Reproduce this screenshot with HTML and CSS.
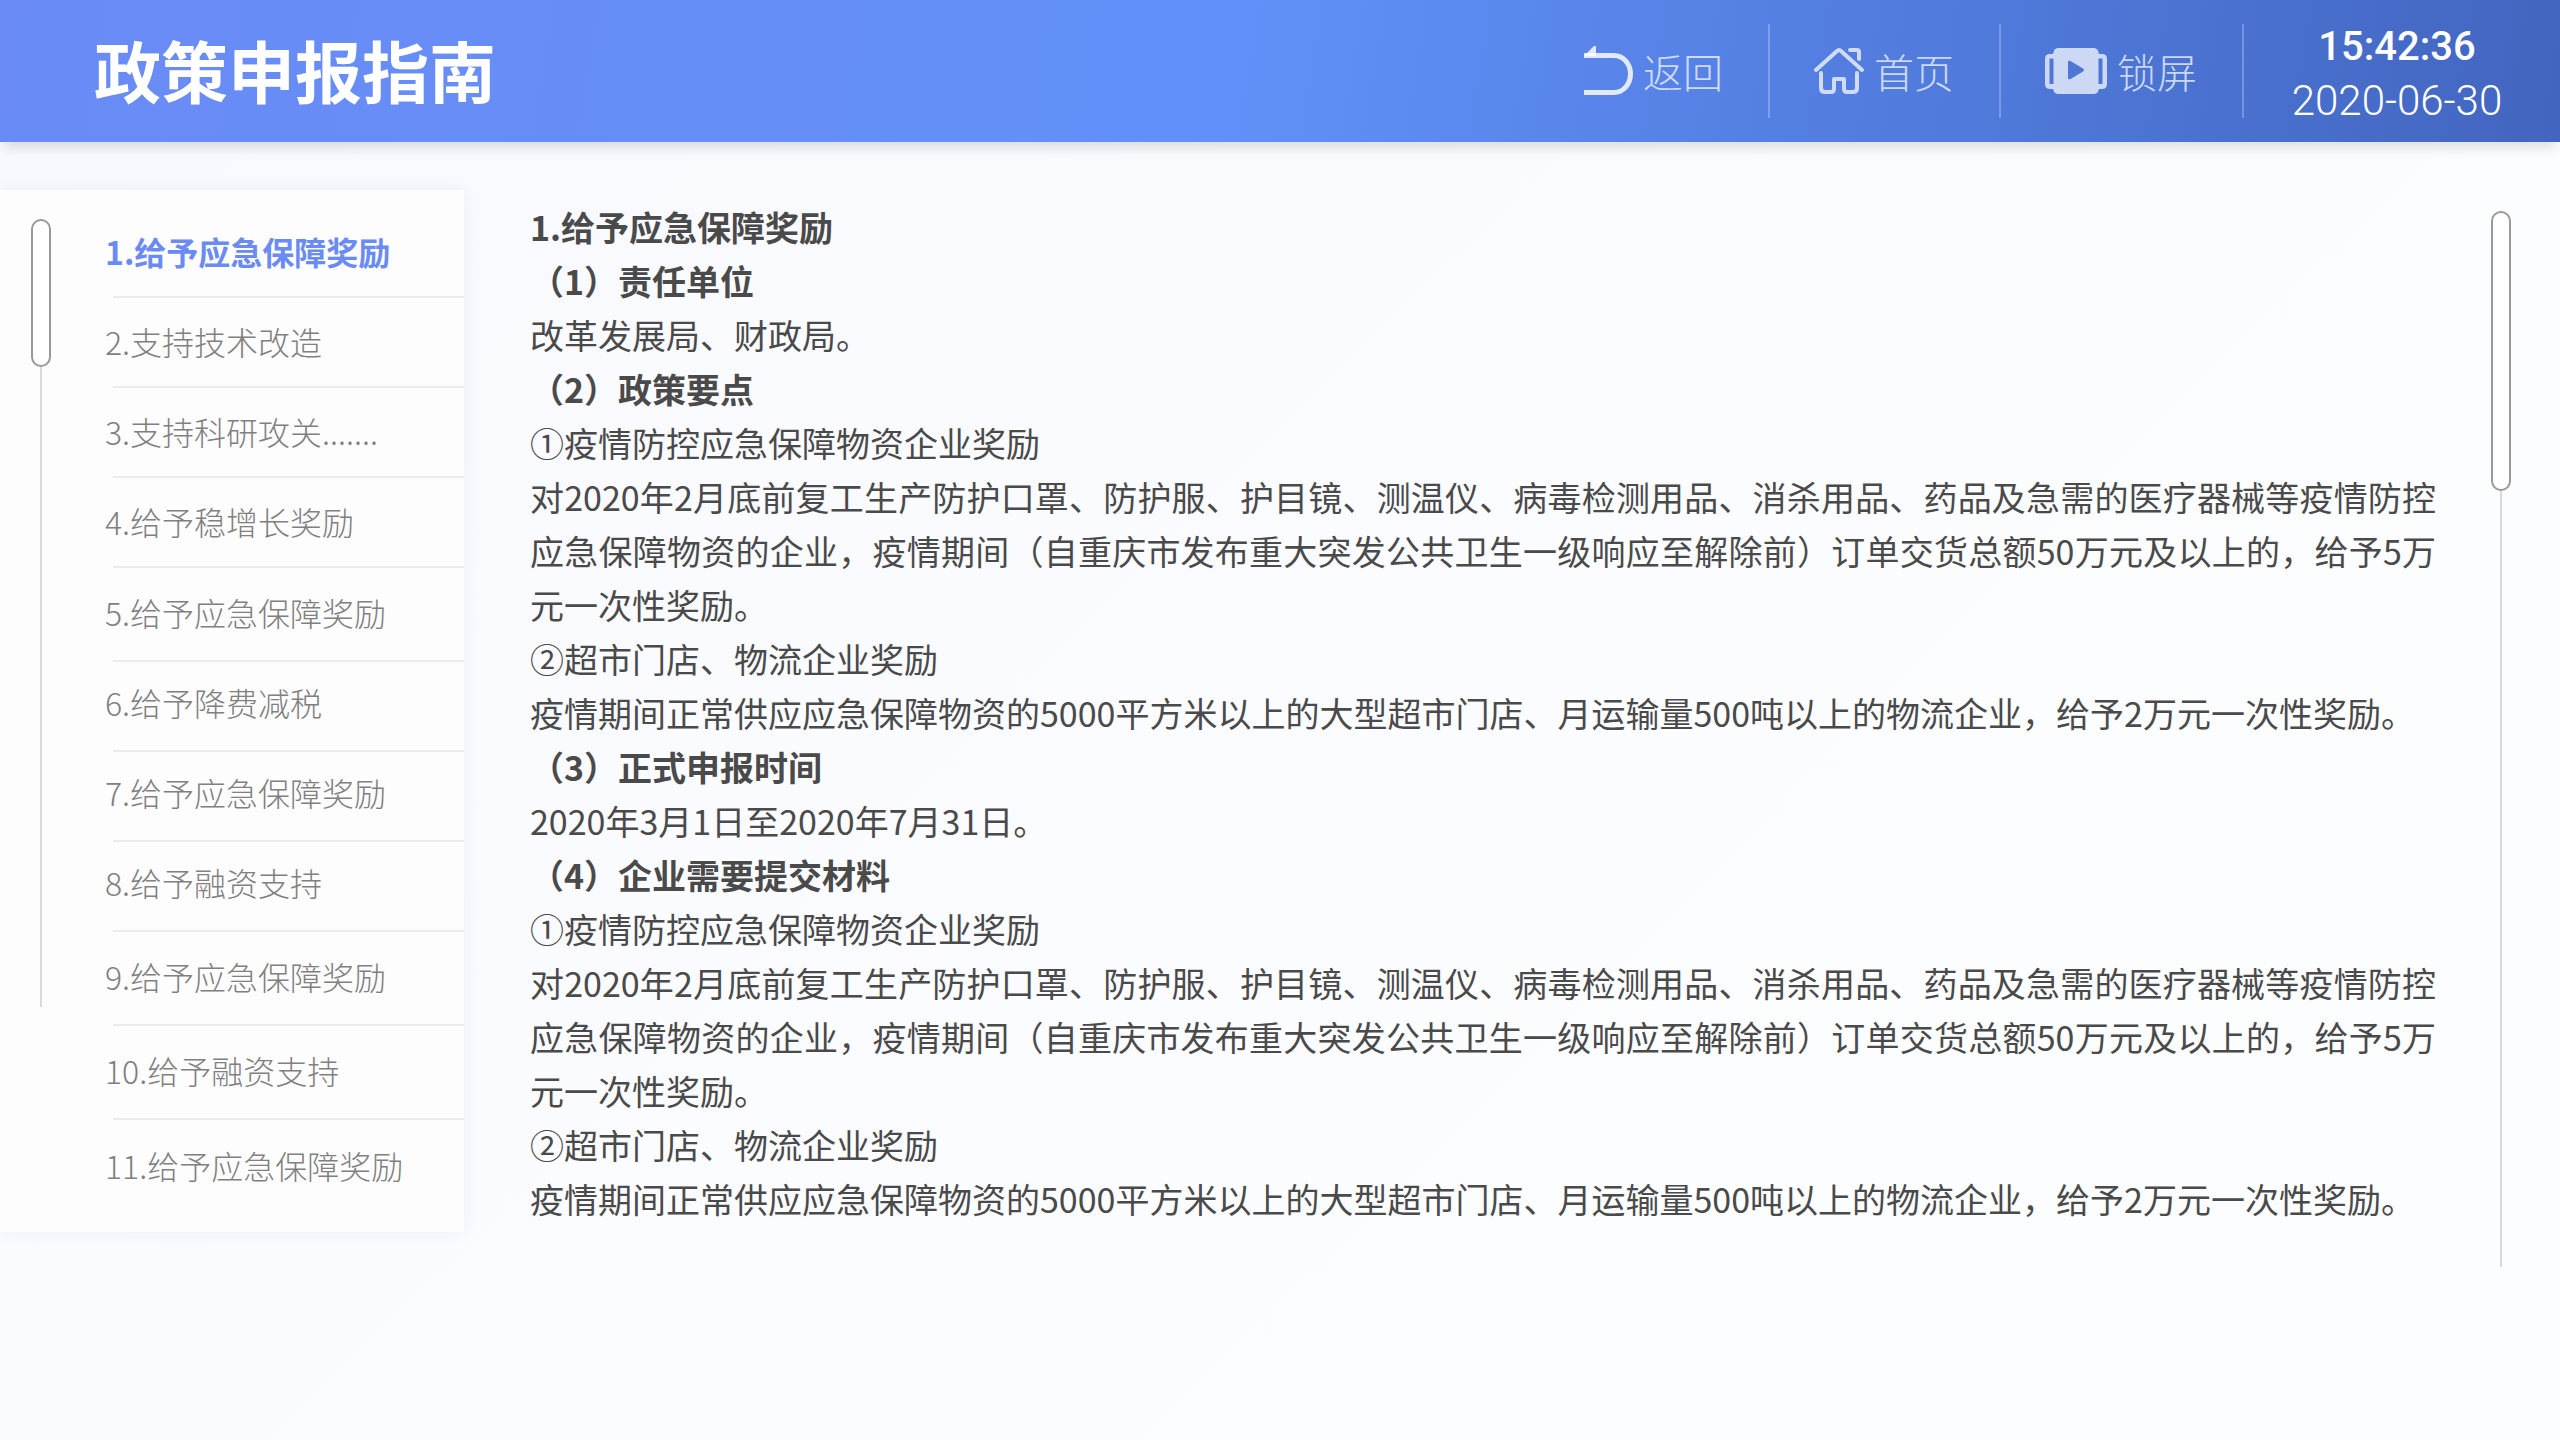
FILE: index.html
```html
<!DOCTYPE html>
<html lang="zh-CN">
<head>
  <meta charset="UTF-8">
  <title>政策申报指南</title>
  <link rel="stylesheet" href="styles.css">
</head>
<body>

  <header class="header">
    <h1 class="title">政策申报指南</h1>
    <nav class="nav">
      <button class="nav-btn">
        <svg class="back-icon" width="49" height="50" viewBox="0 0 49 50">
          <path d="M0 9.500H30A16.500 18.500 0 0 1 30 46.500H0" fill="none" stroke="currentColor" stroke-width="5"/>
          <path d="M0 10L10 0H12V10Z" fill="currentColor"/>
        </svg>
        返回
      </button>
      <button class="nav-btn">
        <svg width="50" height="46" viewBox="0 0 50 46" fill="none" stroke="currentColor" stroke-width="4" stroke-linecap="round" stroke-linejoin="round">
          <path d="M2 22L23 3Q25 1 27 3L48 22"/>
          <path d="M7 25V40Q7 44 11 44H17Q20 44 20 41V31H30V41Q30 44 33 44H39Q43 44 43 40V25"/>
          <path d="M36 2H43Q45 2 45 4V11"/>
        </svg>
        首页
      </button>
      <button class="nav-btn">
        <svg width="62" height="46" viewBox="0 0 62 46">
          <path fill="currentColor" fill-rule="evenodd" d="M13 0H49Q53 0 54 6H57Q62 6 62 11V36Q62 41 57 41H54Q53 46 49 46H13Q9 46 8 41H5Q0 41 0 36V11Q0 6 5 6H8Q9 0 13 0ZM4.500 10.500V36H8.500V10.500ZM53.500 10.500V36H57.500V10.500ZM23 14V30Q23 32 25.500 31L38 23.500Q40 22 38 20.500L25.500 13Q23 12 23 14Z"/>
        </svg>
        锁屏
      </button>
    </nav>
    <div class="clock">
      <div class="time">15:42:36</div>
      <div class="date">2020-06-30</div>
    </div>
  </header>

  <main class="main">
    <aside class="sidebar">
      <div class="scrollbar side-scroll">
        <div class="thumb"></div>
        <div class="track"></div>
      </div>
      <ul class="menu">
        <li class="active"><a href="#">1.给予应急保障奖励</a></li>
        <li><a href="#">2.支持技术改造</a></li>
        <li><a href="#">3.支持科研攻关.......</a></li>
        <li><a href="#">4.给予稳增长奖励</a></li>
        <li class="tall"><a href="#">5.给予应急保障奖励</a></li>
        <li><a href="#">6.给予降费减税</a></li>
        <li><a href="#">7.给予应急保障奖励</a></li>
        <li><a href="#">8.给予融资支持</a></li>
        <li class="tall"><a href="#">9.给予应急保障奖励</a></li>
        <li class="tall"><a href="#">10.给予融资支持</a></li>
        <li class="tall"><a href="#">11.给予应急保障奖励</a></li>
      </ul>
    </aside>

    <article class="content">
      <h2>1.给予应急保障奖励</h2>
      <h3>（1）责任单位</h3>
      <p>改革发展局、财政局。</p>
      <h3>（2）政策要点</h3>
      <p>①疫情防控应急保障物资企业奖励</p>
      <p>对2020年2月底前复工生产防护口罩、防护服、护目镜、测温仪、病毒检测用品、消杀用品、药品及急需的医疗器械等疫情防控应急保障物资的企业，疫情期间（自重庆市发布重大突发公共卫生一级响应至解除前）订单交货总额50万元及以上的，给予5万元一次性奖励。</p>
      <p>②超市门店、物流企业奖励</p>
      <p>疫情期间正常供应应急保障物资的5000平方米以上的大型超市门店、月运输量500吨以上的物流企业，给予2万元一次性奖励。</p>
      <h3>（3）正式申报时间</h3>
      <p>2020年3月1日至2020年7月31日。</p>
      <h3>（4）企业需要提交材料</h3>
      <p>①疫情防控应急保障物资企业奖励</p>
      <p>对2020年2月底前复工生产防护口罩、防护服、护目镜、测温仪、病毒检测用品、消杀用品、药品及急需的医疗器械等疫情防控应急保障物资的企业，疫情期间（自重庆市发布重大突发公共卫生一级响应至解除前）订单交货总额50万元及以上的，给予5万元一次性奖励。</p>
      <p>②超市门店、物流企业奖励</p>
      <p>疫情期间正常供应应急保障物资的5000平方米以上的大型超市门店、月运输量500吨以上的物流企业，给予2万元一次性奖励。</p>
    </article>

    <div class="scrollbar content-scroll">
      <div class="thumb"></div>
      <div class="track"></div>
    </div>
  </main>

</body>
</html>
```
FILE: styles.css
```css
:root {
  --blue: #6a8bf5;
  --text: #4a4a4a;
  --menu-text: #808080;
  --line: #ececec;
}

* {
  box-sizing: border-box;
}

body {
  margin: 0;
  min-height: 100vh;
  background: linear-gradient(135deg, #f8f9ff, #fcfdff 70%);
  color: var(--text);
  font-family: "Noto Sans CJK SC", sans-serif;
}

h1, h2, h3, p, ul {
  margin: 0;
  padding: 0;
}

/* header */
.header {
  display: flex;
  align-items: center;
  height: 142px;
  background: linear-gradient(100deg, #6a8bf5, #6290f8 48%, #4f79da 78%, #4265bf);
  box-shadow: 0 10px 12px -4px rgba(0, 0, 0, 0.12);
  color: white;
}

.title {
  flex: 1;
  padding: 0 0 5px 94px;
  font-size: 67px;
  line-height: 96px;
}

.nav {
  display: flex;
}

.nav-btn {
  display: flex;
  align-items: center;
  gap: 10px;
  height: 94px;
  padding: 0 45px 0 44px;
  border: none;
  border-right: 2px solid rgba(255, 255, 255, 0.25);
  background: none;
  color: rgba(255, 255, 255, 0.72);
  font-family: inherit;
  font-size: 40px;
  font-weight: 300;
  cursor: pointer;
}

.back-icon {
  color: rgba(255, 255, 255, 0.82);
}

.clock {
  min-width: 316px;
  padding: 6px 10px 0 0;
  font-family: Roboto, sans-serif;
  font-size: 42px;
  text-align: center;
  line-height: 54px;
}

.time {
  font-size: 40px;
  font-weight: 500;
}

.date {
  font-weight: 300;
}

/* page body */
.main {
  display: flex;
  align-items: flex-start;
  margin-top: 48px;
}

.sidebar {
  display: flex;
  width: 464px;
  padding: 18px 0;
  background: #fdfdfd;
  box-shadow: 0 0 16px rgba(80, 80, 120, 0.07);
}

.menu {
  flex: 1;
  margin-left: 62px;
  list-style: none;
}

.menu li {
  display: flex;
  align-items: center;
  height: 90px;
  padding-bottom: 2px;
  border-bottom: 2px solid var(--line);
}

.menu .tall ~ li {
  padding-bottom: 8px;
}

.menu li.tall {
  height: 94px;
  padding-bottom: 4px;
}

.menu li:last-child {
  border-bottom: none;
}

.menu a {
  margin-left: -8px;
  color: var(--menu-text);
  font-size: 32px;
  font-weight: 300;
  text-decoration: none;
}

.menu .active a {
  color: var(--blue);
  font-weight: 700;
}

.content {
  flex: 1;
  padding: 10px 55px 0 66px;
  font-size: 34px;
  line-height: 54px;
  text-align: justify;
}

.content h2,
.content h3 {
  font-size: 34px;
  font-weight: 700;
}

/* scrollbars */
.scrollbar {
  display: flex;
  flex-direction: column;
  align-items: center;
  width: 20px;
}

.thumb {
  width: 20px;
  border: 2px solid #999;
  border-radius: 10px;
  background: white;
}

.track {
  flex: 1;
  width: 2px;
  background: #d9d9db;
}

.side-scroll {
  height: 788px;
  margin: 11px 0 0 31px;
}

.side-scroll .thumb {
  height: 148px;
}

.content-scroll {
  height: 1056px;
  margin: 21px 49px 0 0;
}

.content-scroll .thumb {
  height: 280px;
}
```
